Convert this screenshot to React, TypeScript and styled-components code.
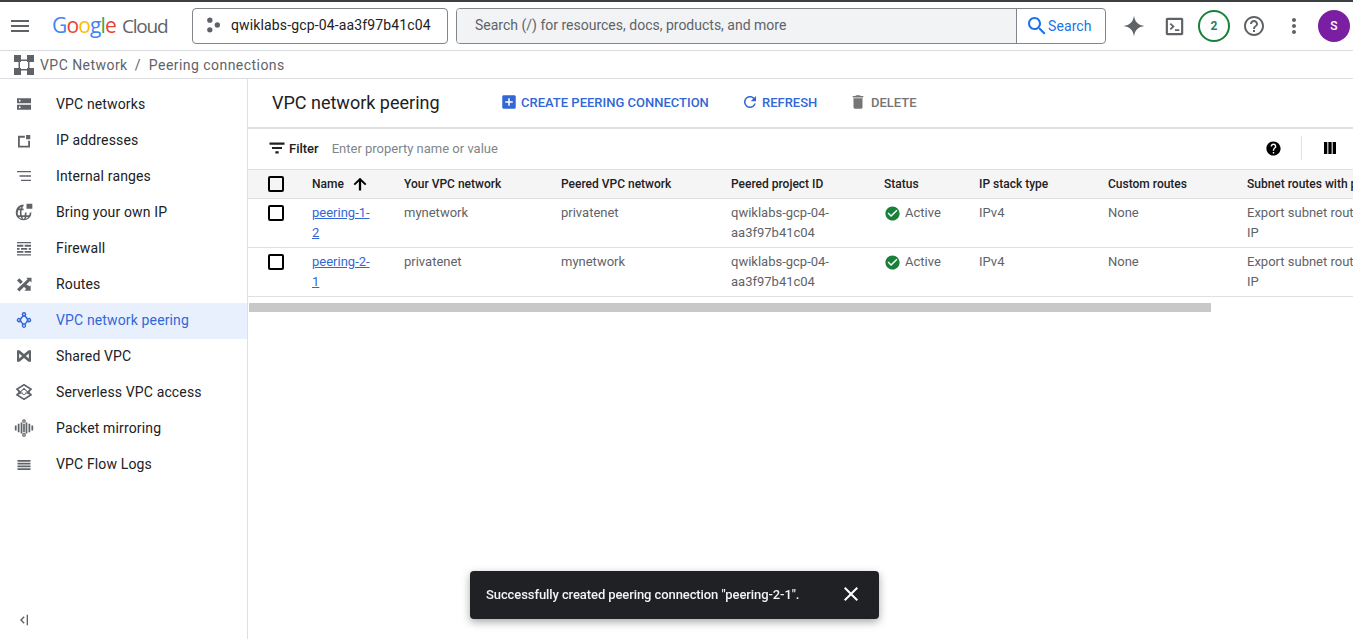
import styled, { createGlobalStyle } from "styled-components";

const GlobalStyle = createGlobalStyle`
  html, body {
    margin: 0;
    height: 100%;
    overflow: hidden;
    background: #fff;
    font-family: Roboto, "Liberation Sans", sans-serif;
  }
  * { box-sizing: border-box; }
`;

const Page = styled.div`
  height: 100vh;
  display: flex;
  flex-direction: column;
`;

const Header = styled.header`
  height: 51px;
  flex: none;
  display: flex;
  align-items: center;
  padding: 0 3px 0 8px;
  border-top: 2px solid #3c4043;
  border-bottom: 1px solid #dadce0;
`;

const Logo = styled.div`
  width: 140px;
  margin-left: 20px;
  padding-bottom: 2px;
  font-family: "Open Sans", sans-serif;
  white-space: nowrap;
  color: #5f6368;
`;

const LogoBrand = styled.span`
  font-size: 21px;
  letter-spacing: -0.85px;
`;

const LogoLetter = styled.span<{ $c: string }>`
  color: ${(p) => p.$c};
`;

const LogoWord = styled.span`
  margin-left: 6px;
  font-size: 19px;
  letter-spacing: -1.2px;
`;

const ProjectPicker = styled.div`
  width: 256px;
  height: 36px;
  display: flex;
  align-items: center;
  gap: 7px;
  padding: 0 0 2px 11px;
  border: 1px solid #80868b;
  border-radius: 4px;
  font-size: 14px;
  letter-spacing: 0.14px;
  color: #202124;
`;

const SearchBox = styled.div`
  width: 650px;
  height: 36px;
  margin-left: 8px;
  display: flex;
  border: 1px solid #80868b;
  border-radius: 4px;
  overflow: hidden;
`;

const SearchInput = styled.div`
  flex: 1;
  display: flex;
  align-items: center;
  padding: 0 0 2px 18px;
  background: #f1f3f4;
  border-right: 1px solid #80868b;
  font-size: 14px;
  color: #5f6368;
`;

const SearchButton = styled.div`
  width: 88px;
  display: flex;
  align-items: center;
  padding: 0 0 1px 8px;
  font-size: 14px;
  letter-spacing: 0.1px;
  color: #1a73e8;
`;

const SearchLabel = styled.span`
  margin-left: -1px;
`;

const HeaderIcons = styled.div`
  margin-left: 12px;
  display: flex;
  gap: 8px;
`;

const IconSlot = styled.div`
  width: 32px;
  height: 32px;
  display: flex;
  align-items: center;
  justify-content: center;
`;

const BadgeCircle = styled(IconSlot)`
  border: 2px solid #188038;
  border-radius: 50%;
  font-size: 12px;
  font-weight: 700;
  color: #2a7a6a;
`;

const Avatar = styled(IconSlot)`
  border-radius: 50%;
  background: #7b1fa2;
  color: #fff;
  font-size: 12px;
  font-weight: 500;
`;

const Breadcrumb = styled.nav`
  height: 28px;
  flex: none;
  display: flex;
  align-items: center;
  padding-left: 14px;
  border-bottom: 1px solid #dadce0;
  font-size: 14px;
  letter-spacing: 0.45px;
  color: #5f6368;
`;

const CrumbRoot = styled.span`
  margin-left: 6px;
`;

const CrumbSlash = styled.span`
  margin: 0 8px 0 7px;
`;

const Body = styled.div`
  flex: 1;
  min-height: 0;
  display: flex;
`;

const Sidebar = styled.aside`
  width: 248px;
  flex: none;
  display: flex;
  flex-direction: column;
  padding-top: 8px;
  border-right: 1px solid #e0e0e0;
`;

const NavItem = styled.div<{ $active?: boolean }>`
  height: 36px;
  flex: none;
  display: flex;
  align-items: center;
  gap: 22px;
  padding: 0 0 2px 14px;
  font-size: 14px;
  letter-spacing: 0.14px;
  color: ${(p) => (p.$active ? "#3367d6" : "#202124")};
  background: ${(p) => (p.$active ? "#e8f0fe" : "transparent")};
`;

const Collapse = styled.div`
  margin-top: auto;
  height: 38px;
  display: flex;
  align-items: center;
  padding-left: 16px;
`;

const Main = styled.main`
  flex: 1;
  min-width: 0;
  overflow: hidden;
`;

const Toolbar = styled.div`
  height: 50px;
  display: flex;
  align-items: center;
  padding: 0 0 2px 24px;
  border-bottom: 2px solid #e0e0e0;
`;

const Title = styled.h1`
  width: 228px;
  margin: 0;
  font-size: 18px;
  font-weight: 400;
  color: #202124;
`;

const ToolButton = styled.div<{ $disabled?: boolean; $gap: number; $width: number }>`
  width: ${(p) => p.$width}px;
  display: flex;
  align-items: center;
  gap: ${(p) => p.$gap}px;
  font-size: 13px;
  font-weight: 500;
  white-space: nowrap;
  color: ${(p) => (p.$disabled ? "#757575" : "#3367d6")};
`;

const FilterBar = styled.div`
  height: 40px;
  display: flex;
  align-items: center;
  padding: 0 14px 2px 19px;
`;

const FilterLabel = styled.span`
  margin-left: 2px;
  font-size: 13px;
  font-weight: 500;
  color: #202124;
`;

const FilterHint = styled.span`
  flex: 1;
  margin-left: 13px;
  font-size: 13px;
  color: #80868b;
`;

const Divider = styled.span`
  width: 1px;
  height: 24px;
  margin: 0 19px;
  background: #e0e0e0;
`;

const Table = styled.table`
  width: 1305px;
  table-layout: fixed;
  border-collapse: separate;
  border-spacing: 0;
  font-size: 13px;
`;

const Th = styled.th`
  height: 30px;
  padding: 0;
  text-align: left;
  font-weight: 500;
  font-size: 12px;
  white-space: nowrap;
  overflow: hidden;
  color: #202124;
  background: #f5f5f5;
  border-top: 1px solid #e0e0e0;
  border-bottom: 1px solid #e0e0e0;
`;

const Td = styled.td`
  padding: 4px 0;
  height: 49px;
  line-height: 20px;
  vertical-align: top;
  color: #5f6368;
  border-bottom: 1px solid #e0e0e0;
`;

const CheckCell = styled.div`
  padding-left: 20px;
  display: flex;
`;

const Checkbox = styled.span`
  width: 16px;
  height: 16px;
  margin-top: 2px;
  border: 2px solid #000;
  border-radius: 2px;
`;

const HeadCheck = styled(Checkbox)`
  margin-top: 0;
`;

const NameHead = styled.div`
  display: flex;
  align-items: center;
  gap: 7px;
`;

const PeerLink = styled.a`
  display: block;
  width: 60px;
  color: #3367d6;
  text-decoration: underline;
`;

const ProjectId = styled.div`
  width: 117px;
`;

const SubnetRoutes = styled.div`
  width: 200px;
`;

const StatusCell = styled.div`
  display: flex;
  align-items: center;
  height: 20px;
  gap: 4px;
`;

const ScrollThumb = styled.div`
  width: 962px;
  height: 9px;
  margin: 6px 0 0 1px;
  background: #c8c8c8;
`;

const Toast = styled.div`
  position: fixed;
  left: 470px;
  top: 571px;
  width: 409px;
  height: 48px;
  display: flex;
  align-items: center;
  justify-content: space-between;
  padding: 0 16px 2px;
  border-radius: 4px;
  background: #202124;
  box-shadow: 0 3px 8px rgba(0, 0, 0, 0.35);
  font-size: 13px;
  font-weight: 500;
  letter-spacing: -0.09px;
  color: #f1f3f4;
`;

const Svg = styled.svg<{ $color?: string }>`
  display: block;
  flex: none;
  fill: ${(p) => p.$color || "#5f6368"};
`;

type IconProps = { d: string; size?: number; color?: string };

const Icon = ({ d, size = 24, color }: IconProps) => (
  <Svg width={size} height={size} viewBox="0 0 24 24" $color={color}>
    <path d={d} />
  </Svg>
);

const icons = {
  menu: "M3 18h18v-2H3v2zm0-5h18v-2H3v2zm0-7v2h18V6H3z",
  search:
    "M15.5 14h-.79l-.28-.27C15.41 12.59 16 11.11 16 9.5 16 5.91 13.09 3 9.5 3S3 5.91 3 9.5 5.91 16 9.5 16c1.61 0 3.09-.59 4.23-1.57l.27.28v.79l5 4.99L20.49 19l-4.99-5zm-6 0C7.01 14 5 11.99 5 9.5S7.01 5 9.5 5 14 7.01 14 9.5 11.99 14 9.5 14z",
  spark: "M12 1.5C12.8 7.8 16.2 11.2 22.5 12 16.2 12.8 12.8 16.2 12 22.5 11.2 16.2 7.8 12.8 1.5 12 7.8 11.2 11.2 7.8 12 1.5z",
  terminal:
    "M20 2H4C2.900 2 2 2.900 2 4v16c0 1.100.9 2 2 2h16c1.100 0 2-.9 2-2V4c0-1.100-.9-2-2-2zm-.5 17.500h-15v-15h15v15zM6.500 9.500l2.800 2.500-2.800 2.500 1.400 1.500 4.300-4-4.300-4zM12.500 15h5v2h-5z",
  helpOutline:
    "M11 18h2v-2h-2v2zm1-16C6.48 2 2 6.48 2 12s4.48 10 10 10 10-4.48 10-10S17.52 2 12 2zm0 18c-4.41 0-8-3.59-8-8s3.59-8 8-8 8 3.59 8 8-3.59 8-8 8zm0-14c-2.21 0-4 1.79-4 4h2c0-1.1.9-2 2-2s2 .9 2 2c0 2-3 1.75-3 5h2c0-2.25 3-2.5 3-5 0-2.21-1.79-4-4-4z",
  help:
    "M12 2C6.48 2 2 6.48 2 12s4.48 10 10 10 10-4.48 10-10S17.52 2 12 2zm1 17h-2v-2h2v2zm2.07-7.75l-.9.92C13.45 12.9 13 13.5 13 15h-2v-.5c0-1.1.45-2.1 1.17-2.83l1.24-1.26c.37-.36.59-.86.59-1.41 0-1.1-.9-2-2-2s-2 .9-2 2H8c0-2.21 1.79-4 4-4s4 1.79 4 4c0 .88-.36 1.68-.93 2.25z",
  more: "M12 8c1.1 0 2-.9 2-2s-.9-2-2-2-2 .9-2 2 .9 2 2 2zm0 2c-1.1 0-2 .9-2 2s.9 2 2 2 2-.9 2-2-.9-2-2-2zm0 6c-1.1 0-2 .9-2 2s.9 2 2 2 2-.9 2-2-.9-2-2-2z",
  filter: "M10 18.500h4v-2.500h-4v2.500zM3 5.500V8h18V5.500H3zm3 7.700h12v-2.500H6v2.500z",
  arrowUp: "M3.500 12l1.800 1.800 5.200-5.200v11.900h3V8.600l5.200 5.200 1.800-1.800L12 3.500z",
  refresh:
    "M17.65 6.35C16.2 4.9 14.21 4 12 4c-4.42 0-7.99 3.58-7.99 8s3.57 8 7.99 8c3.73 0 6.84-2.55 7.73-6h-2.08c-.82 2.33-3.04 4-5.65 4-3.31 0-6-2.69-6-6s2.69-6 6-6c1.66 0 3.14.69 4.22 1.78L13 11h7V4l-2.35 2.35z",
  trash: "M6 19c0 1.1.9 2 2 2h8c1.1 0 2-.9 2-2V7H6v12zM19 4h-3.5l-1-1h-5l-1 1H5v2h14V4z",
  addBox:
    "M19 3H5c-1.11 0-2 .9-2 2v14c0 1.1.89 2 2 2h14c1.1 0 2-.9 2-2V5c0-1.1-.9-2-2-2zm-2 10h-4v4h-2v-4H7v-2h4V7h2v4h4v2z",
  check:
    "M12 2C6.48 2 2 6.48 2 12s4.48 10 10 10 10-4.48 10-10S17.52 2 12 2zm-2 15l-5-5 1.41-1.41L10 14.17l7.59-7.59L19 8l-9 9z",
  close:
    "M19 6.41L17.59 5 12 10.59 6.41 5 5 6.41 10.59 12 5 17.59 6.41 19 12 13.41 17.59 19 19 17.59 13.41 12z",
  columns: "M4 4h4.400v16H4zM9.800 4h4.400v16H9.800zM15.600 4H20v16h-4.400z",
  project: "M7 3a3.2 3.2 0 1 1 0 6.4A3.2 3.2 0 0 1 7 3zm0 11.6a3.2 3.2 0 1 1 0 6.4 3.2 3.2 0 0 1 0-6.4zM16 8.800a3.200 3.200 0 1 1 0 6.400 3.200 3.200 0 0 1 0-6.400z",
  topology:
    "M0 0h8.400v8.400H0zM15.600 0H24v8.400h-8.400zM0 15.600h8.400V24H0zM15.600 15.600H24V24h-8.400zM8.400 5.400h7.200v1.800H8.400zM8.400 16.800h7.200v1.800H8.400zM5.400 8.400h1.800v7.200H5.400zM16.800 8.400h1.800v7.200h-1.800z",
  networks:
    "M3.600 5h16.800v6.200H3.600V5zm3.300 2a1.100 1.100 0 1 0 0 2.200 1.100 1.100 0 0 0 0-2.200zM3.600 12.800h16.800V19H3.600v-6.200zm3.300 2a1.100 1.100 0 1 0 0 2.200 1.100 1.100 0 0 0 0-2.200z",
  address: "M4.800 7H13v2.200H7v9.600h10V13h2.200v8H4.800V7zM14.500 6h5v5h-5z",
  ranges: "M3.600 6h16.800v1.600H3.600zM6.600 11.200h13.800v1.600H6.600zM8.500 16.400h11.900V18H8.500z",
  ownIp:
    "M11.500 3a9.500 9.500 0 1 0 9.500 9.500h-2a7.500 7.500 0 0 1-1 3.500h-3.200c.2-1.100.3-2.300.3-3.500h-2c0 1.200-.1 2.400-.4 3.500H9.300A17 17 0 0 1 9 12.500c0-.9.100-1.800.2-2.600h2.300v-2H9.800c.4-1.200 1-2.300 1.700-3V3zM5.300 9.900h2a17 17 0 0 0 0 6.100H5a7.500 7.500 0 0 1 .3-6.100zM6.300 7.900c.7-.9 1.700-1.600 2.800-2.100-.5.700-.9 1.400-1.200 2.100H6.300zM5.900 18h2.200c.3.900.7 1.700 1.200 2.300A7.500 7.500 0 0 1 5.900 18zm4.200 0h2.800c-.3 1-.8 1.800-1.400 2.600-.6-.8-1.100-1.600-1.400-2.600zm4.800 0H17a7.500 7.500 0 0 1-3.300 2.300c.5-.6.900-1.400 1.200-2.300zM15 2h7v6h-7V2z",
  firewall:
    "M3.600 4.800h16.800v1.600H3.600zM3.600 8.200h7.600v2.200H3.600zM12.800 8.200h7.600v2.200h-7.600zM3.600 11.900h3v2.200h-3zM8.400 11.900h7.500v2.200H8.400zM17.700 11.900h2.700v2.200h-2.700zM3.600 15.600h7.600v2.200H3.600zM12.800 15.600h7.600v2.200h-7.600zM3.600 19.400h16.800V21H3.600z",
  routes:
    "M10.590 9.170L6.410 5 3.600 7.810l4.170 4.170 2.820-2.810zM14.500 4.500l1.840 1.840L3.600 18.190 6.410 21 19.160 8.260 21 10.100V4.500h-6.500zm.33 8.110l-2.810 2.810 2.530 2.530L12.500 20H20v-6.500l-1.240 1.240-3.930-2.130z",
  bowtie:
    "M3.600 5h2.900L12 9.500 17.500 5h2.900v14h-2.900L12 14.500 6.500 19H3.600V5zM6.200 9v6l3.500-3-3.500-3zM17.800 9l-3.500 3 3.500 3V9z",
  serverless:
    "M12 2l10 6.500-3.500 3.500L22 15.500 12 22 2 15.500 5.500 12 2 8.500 12 2zm0 2.400L5.200 8.700 7.800 11 12 7l4.200 4 2.600-2.300L12 4.400zm-3.200 9.300L5.200 15.300 12 19.600l6.800-4.300-3.600-1.600L12 16l-3.200-2.300zM11 9.500l-3 3h2.500v2h3v-2H16l-3-3h-2z",
  mirroring:
    "M1 9h2.100v6H1zM4.500 7h2.100v10H4.500zM8 5.500h2.100v13H8zM13.900 5.500H16v13h-2.100zM17.400 7h2.100v10h-2.100zM20.900 9H23v6h-2.100zM12 1.500a2.200 2.200 0 1 1 0 4.400 2.200 2.200 0 0 1 0-4.400zm0 1.400a.8.8 0 1 0 0 1.600.8.8 0 0 0 0-1.600zM12 18.100a2.200 2.200 0 1 1 0 4.400 2.200 2.200 0 0 1 0-4.400zm0 1.400a.8.8 0 1 0 0 1.600.8.8 0 0 0 0-1.600zM11 7h2v10h-2z",
  flowLogs: "M4.200 7.200h15.600v2H4.200zM4.200 10.500h15.600v2H4.200zM4.200 13.800h15.600v2H4.200zM4.200 17.100h15.600v2H4.200z",
  peering:
    "M12 2.500a2.700 2.700 0 0 1 2.200 4.300l2.400 3.100a2.700 2.700 0 1 1-.2 4.400l-2.300 2.900a2.700 2.700 0 1 1-4.300 0l-2.200-2.900a2.700 2.700 0 1 1-.2-4.400l2.400-3.100A2.700 2.700 0 0 1 12 2.500zm0 1.700a1 1 0 1 0 0 2 1 1 0 0 0 0-2zm.9 4a3 3 0 0 1-1.800 0l-2.500 3.100c.2.300.2.600.2.900s0 .6-.1.800l2.300 3a3 3 0 0 1 2 0l2.300-3c-.1-.2-.1-.5-.1-.8s0-.6.2-.9L12.900 8.200zM5.800 11a1 1 0 1 0 0 2 1 1 0 0 0 0-2zm12.400 0a1 1 0 1 0 0 2 1 1 0 0 0 0-2zM12 17.800a1 1 0 1 0 0 2 1 1 0 0 0 0-2z",
  collapse: "M16 4h2v16h-2zM11.500 6.500 13 8l-4 4 4 4-1.500 1.500L6 12z",
};

const navItems: { label: string; icon: keyof typeof icons; active?: boolean }[] = [
  { label: "VPC networks", icon: "networks" },
  { label: "IP addresses", icon: "address" },
  { label: "Internal ranges", icon: "ranges" },
  { label: "Bring your own IP", icon: "ownIp" },
  { label: "Firewall", icon: "firewall" },
  { label: "Routes", icon: "routes" },
  { label: "VPC network peering", icon: "peering", active: true },
  { label: "Shared VPC", icon: "bowtie" },
  { label: "Serverless VPC access", icon: "serverless" },
  { label: "Packet mirroring", icon: "mirroring" },
  { label: "VPC Flow Logs", icon: "flowLogs" },
];

const columnWidths = [64, 92, 157, 170, 153, 95, 129, 139, 306];

const peerings = [
  { name: "peering-1-2", own: "mynetwork", peer: "privatenet" },
  { name: "peering-2-1", own: "privatenet", peer: "mynetwork" },
];

export default function App() {
  return (
    <Page>
      <GlobalStyle />
      <Header>
        <Icon d={icons.menu} />
        <Logo>
          <LogoBrand>
            <LogoLetter $c="#4285f4">G</LogoLetter>
            <LogoLetter $c="#ea4335">o</LogoLetter>
            <LogoLetter $c="#fbbc04">o</LogoLetter>
            <LogoLetter $c="#4285f4">g</LogoLetter>
            <LogoLetter $c="#34a853">l</LogoLetter>
            <LogoLetter $c="#ea4335">e</LogoLetter>
          </LogoBrand>
          <LogoWord>Cloud</LogoWord>
        </Logo>
        <ProjectPicker>
          <Icon d={icons.project} size={20} />
          qwiklabs-gcp-04-aa3f97b41c04
        </ProjectPicker>
        <SearchBox>
          <SearchInput>Search (/) for resources, docs, products, and more</SearchInput>
          <SearchButton>
            <Icon d={icons.search} color="#1a73e8" />
            <SearchLabel>Search</SearchLabel>
          </SearchButton>
        </SearchBox>
        <HeaderIcons>
          <IconSlot>
            <Icon d={icons.spark} size={24} />
          </IconSlot>
          <IconSlot>
            <Icon d={icons.terminal} size={21} />
          </IconSlot>
          <BadgeCircle>2</BadgeCircle>
          <IconSlot>
            <Icon d={icons.helpOutline} />
          </IconSlot>
          <IconSlot>
            <Icon d={icons.more} />
          </IconSlot>
          <Avatar>S</Avatar>
        </HeaderIcons>
      </Header>
      <Breadcrumb>
        <Icon d={icons.topology} size={20} />
        <CrumbRoot>VPC Network</CrumbRoot>
        <CrumbSlash>/</CrumbSlash>
        Peering connections
      </Breadcrumb>
      <Body>
        <Sidebar>
          {navItems.map((item) => (
            <NavItem key={item.label} $active={item.active}>
              <Icon
                d={icons[item.icon]}
                size={20}
                color={item.active ? "#3367d6" : undefined}
              />
              {item.label}
            </NavItem>
          ))}
          <Collapse>
            <Icon d={icons.collapse} size={16} />
          </Collapse>
        </Sidebar>
        <Main>
          <Toolbar>
            <Title>VPC network peering</Title>
            <ToolButton $gap={3} $width={241}>
              <Icon d={icons.addBox} size={18} color="#3367d6" />
              CREATE PEERING CONNECTION
            </ToolButton>
            <ToolButton $gap={3} $width={108}>
              <Icon d={icons.refresh} size={18} color="#3367d6" />
              REFRESH
            </ToolButton>
            <ToolButton $disabled $gap={4} $width={80}>
              <Icon d={icons.trash} size={18} color="#757575" />
              DELETE
            </ToolButton>
          </Toolbar>
          <FilterBar>
            <Icon d={icons.filter} size={20} color="#202124" />
            <FilterLabel>Filter</FilterLabel>
            <FilterHint>Enter property name or value</FilterHint>
            <Icon d={icons.help} size={17} color="#000" />
            <Divider />
            <Icon d={icons.columns} size={18} color="#000" />
          </FilterBar>
          <Table>
            <colgroup>
              {columnWidths.map((w, i) => (
                <col key={i} width={w} />
              ))}
            </colgroup>
            <thead>
              <tr>
                <Th>
                  <CheckCell>
                    <HeadCheck />
                  </CheckCell>
                </Th>
                <Th>
                  <NameHead>
                    Name
                    <Icon d={icons.arrowUp} size={18} color="#000" />
                  </NameHead>
                </Th>
                <Th>Your VPC network</Th>
                <Th>Peered VPC network</Th>
                <Th>Peered project ID</Th>
                <Th>Status</Th>
                <Th>IP stack type</Th>
                <Th>Custom routes</Th>
                <Th>Subnet routes with public IP</Th>
              </tr>
            </thead>
            <tbody>
              {peerings.map((row) => (
                <tr key={row.name}>
                  <Td>
                    <CheckCell>
                      <Checkbox />
                    </CheckCell>
                  </Td>
                  <Td>
                    <PeerLink href="#">{row.name}</PeerLink>
                  </Td>
                  <Td>{row.own}</Td>
                  <Td>{row.peer}</Td>
                  <Td>
                    <ProjectId>qwiklabs-gcp-04-aa3f97b41c04</ProjectId>
                  </Td>
                  <Td>
                    <StatusCell>
                      <Icon d={icons.check} size={17} color="#188038" />
                      Active
                    </StatusCell>
                  </Td>
                  <Td>IPv4</Td>
                  <Td>None</Td>
                  <Td>
                    <SubnetRoutes>Export subnet routes with public IP</SubnetRoutes>
                  </Td>
                </tr>
              ))}
            </tbody>
          </Table>
          <ScrollThumb />
        </Main>
      </Body>
      <Toast>
        Successfully created peering connection "peering-2-1".
        <Icon d={icons.close} size={24} color="#fff" />
      </Toast>
    </Page>
  );
}
